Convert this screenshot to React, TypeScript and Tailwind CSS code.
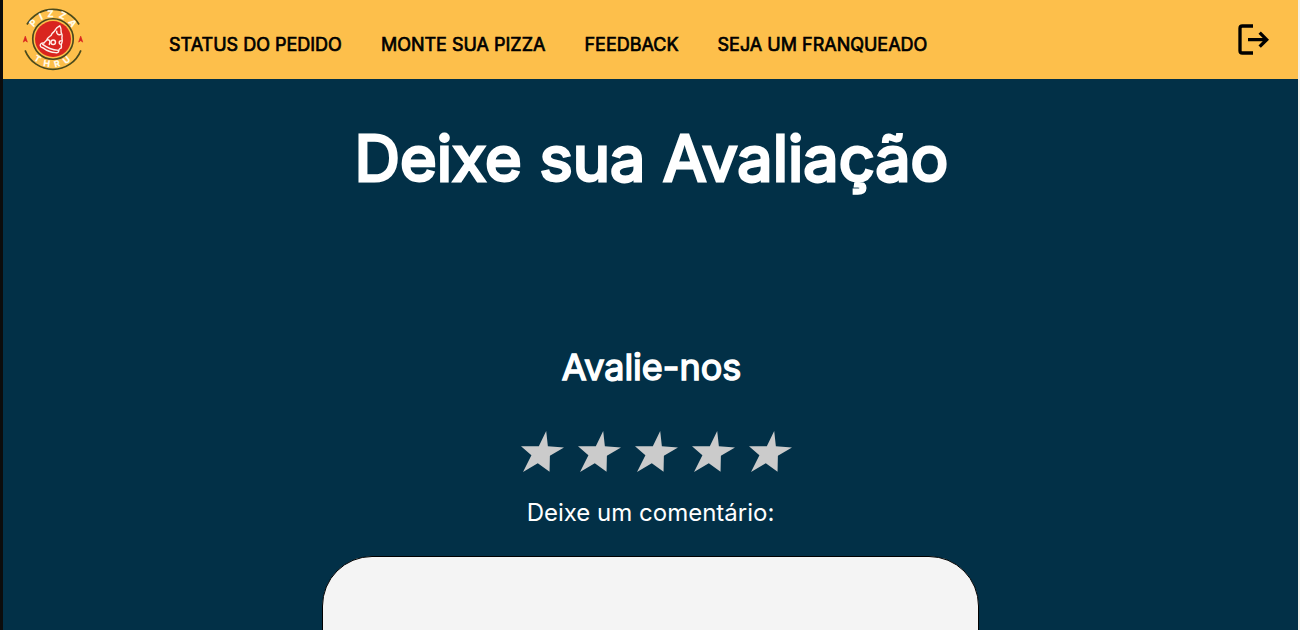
import { useState } from "react";

const links = ["STATUS DO PEDIDO", "MONTE SUA PIZZA", "FEEDBACK", "SEJA UM FRANQUEADO"];

function Logo() {
  return (
    <svg viewBox="0 0 300 300" className="size-[62px] overflow-visible" role="img" aria-label="Pizza Thru">
      <defs>
        <path id="arc-top" d="M44 150a106 106 0 0 1 212 0" />
        <path id="arc-bottom" d="M14 150a136 136 0 0 0 272 0" />
      </defs>
      <g fill="none" stroke="#4a4a1c" strokeWidth="8">
        <path d="M24 80a145 145 0 0 1 252 0" />
        <path d="M15 205a145 145 0 0 0 270 0" />
        <circle cx="150" cy="150" r="98" />
      </g>
      <circle cx="150" cy="150" r="87" fill="#d9251f" />
      <path d="M6 165l10-29 10 29-10-7zM274 165l10-29 10 29-10-7z" fill="#d9251f" stroke="#d9251f" strokeWidth="3" />
      <g fill="none" stroke="#fff0ea" strokeWidth="7" strokeLinecap="round" strokeLinejoin="round">
        <path d="M183 86c-7 4-16 8-21 18-4 12-14 14-18 22-2 10-15 12-21 22-3 12-13 14-17 22-8-3-18 3-18 11 0 9 8 10 14 12 18 14 38 22 60 23 10 3 16-2 16-10 0-9 5-9 11-12 6-10-4-16 4-26 6-12-3-18 1-30 2-12-7-16-5-28 1-9-2-16-6-24z" />
        <path d="M100 176c22 17 46 26 76 29" />
        <circle cx="151" cy="166" r="11" />
        <path d="M168 112c-2 12 6 20 18 16M124 154c10-1 14 10 8 22M190 158c-11 0-14 12-5 18" />
      </g>
      <g fill="#fffbe8" fontFamily="Inter, sans-serif" fontWeight="800" textAnchor="middle">
        <text fontSize="46" letterSpacing="20">
          <textPath href="#arc-top" startOffset="53%">PIZZA</textPath>
        </text>
        <text fontSize="43" letterSpacing="26">
          <textPath href="#arc-bottom" startOffset="52%">THRU</textPath>
        </text>
      </g>
    </svg>
  );
}

function Star() {
  return (
    <svg viewBox="0 0 128 122" className="h-[41px] w-[43px]" fill="currentColor" aria-hidden="true">
      <path d="M75 0l5 45 48 4-42 25-1 47-35-25-44 26 25-50L0 45h53z" />
    </svg>
  );
}

export default function App() {
  const [rating, setRating] = useState(0);
  return (
    <div className="h-screen overflow-y-auto border-r-2 border-l-[3px] border-r-[#f4f1ea] border-l-[#0c0c0c] bg-[#023047] font-['Inter',sans-serif] text-white [scrollbar-width:none]">
      <header className="flex h-[79px] items-center bg-[#fdbf4b] pr-[29px] pl-[19px] text-black">
        <a href="#" className="-mt-0.5 shrink-0">
          <Logo />
        </a>
        <nav className="ml-[85px] flex gap-[39px] pt-2.5">
          {links.map((l) => (
            <a key={l} href="#" className="text-lg whitespace-nowrap [-webkit-text-stroke:0.7px]">
              {l}
            </a>
          ))}
        </nav>
        <button type="button" aria-label="Sair" className="-mt-0.5 ml-auto">
          <svg viewBox="0 0 96 96" className="size-8" fill="none" stroke="currentColor" strokeWidth="10">
            <path d="M48 9H16Q9 9 9 16v67q0 7 7 7h32" />
            <path d="M33 50h55M68 29l21 21-21 21" />
          </svg>
        </button>
      </header>
      <main className="flex flex-col items-center px-8 pt-10">
        <h1 className="pl-0.5 text-[63px] leading-[78px] [-webkit-text-stroke:3px]">Deixe sua Avaliação</h1>
        <h2 className="mt-[146px] pl-0.5 text-4xl leading-12 [-webkit-text-stroke:1.5px]">Avalie-nos</h2>
        <form className="flex w-full flex-col items-center">
          <div role="radiogroup" aria-label="Avalie-nos" className="mt-10 ml-3 flex gap-3.5">
            {[1, 2, 3, 4, 5].map((n) => (
              <label key={n} className={n <= rating ? "cursor-pointer text-[#fdbf4b]" : "cursor-pointer text-[#cbcbcb]"}>
                <input
                  type="radio"
                  name="nota"
                  className="sr-only"
                  aria-label={`${n} de 5`}
                  checked={rating === n}
                  onChange={() => setRating(n)}
                />
                <Star />
              </label>
            ))}
          </div>
          <label htmlFor="comentario" className="mt-[25px] text-2xl leading-8">
            Deixe um comentário:
          </label>
          <textarea
            id="comentario"
            className="mt-[27px] h-60 w-full max-w-[657px] resize-none rounded-[50px] border border-black bg-[#f4f4f4] p-8 text-xl text-black"
          />
        </form>
      </main>
    </div>
  );
}
